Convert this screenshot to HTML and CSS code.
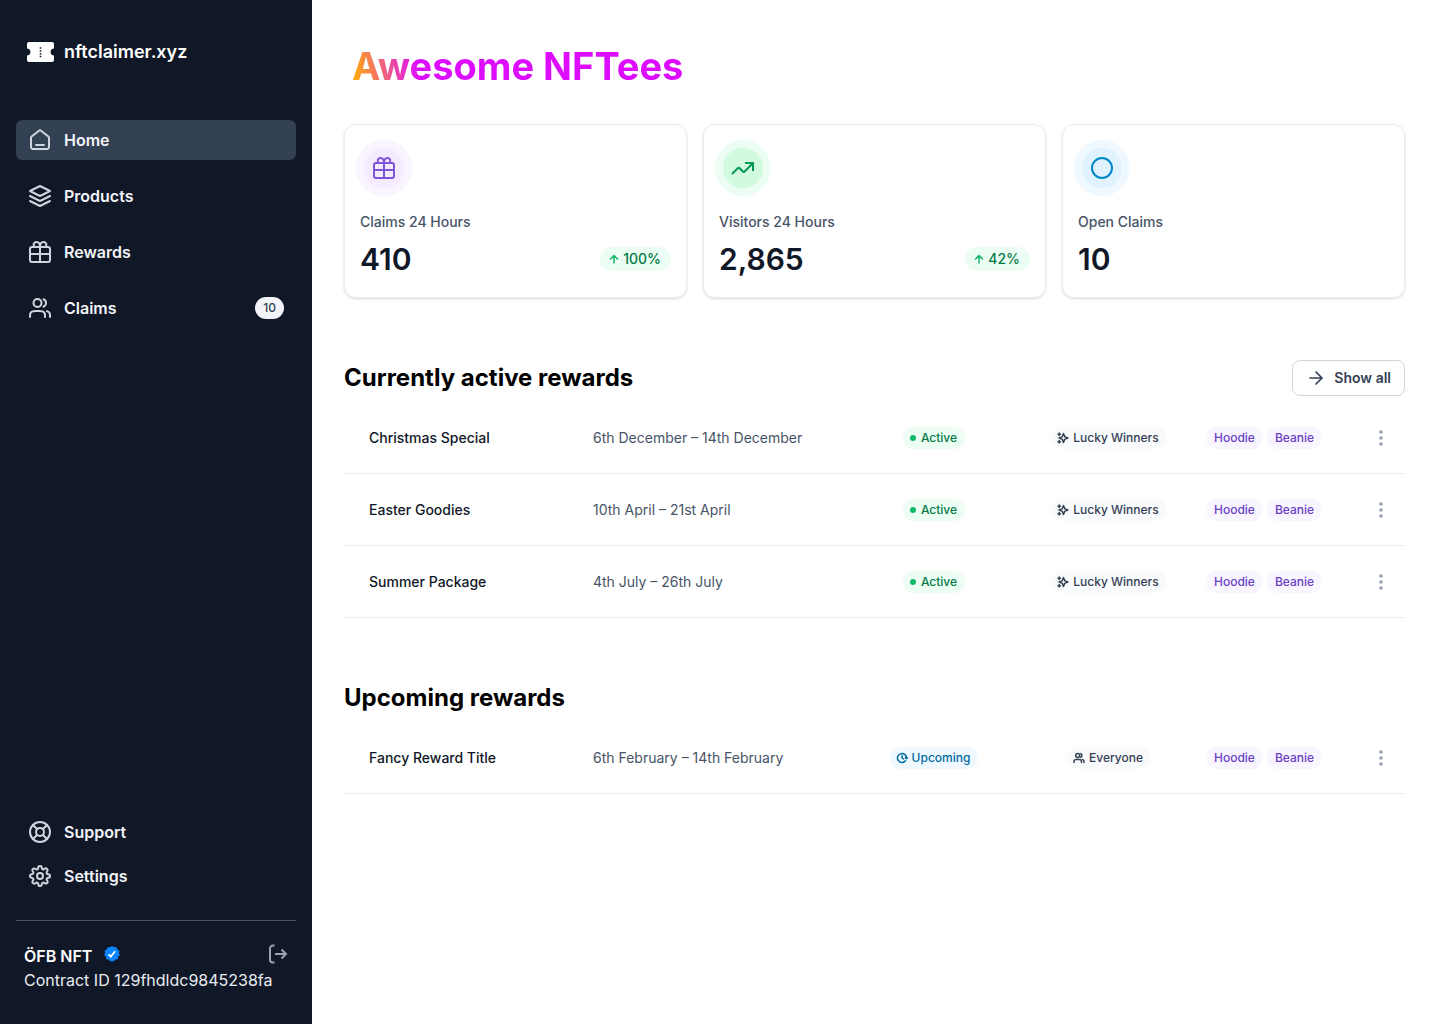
FILE: index.html
```
<!DOCTYPE html>
<html lang="en">
<head>
    <meta charset="UTF-8">
    <meta name="viewport" content="width=device-width, initial-scale=1.0">
    <title>nftclaimer.xyz - Awesome NFTees</title>
    <link rel="stylesheet" href="styles.css">
</head>
<body>

    <!-- Shared icons -->
    <svg class="sprite" aria-hidden="true">
        <symbol id="gift" viewBox="0 0 24 24">
            <path d="M12 7v15M2 14h20M4 7h16a2 2 0 0 1 2 2v11a2 2 0 0 1-2 2H4a2 2 0 0 1-2-2V9a2 2 0 0 1 2-2zM12 7c0-3-1-5-3.500-5A2.800 2.800 0 0 0 6.500 6.800M12 7c0-3 1-5 3.500-5a2.800 2.800 0 0 1 2 4.800"/>
        </symbol>
        <symbol id="users" viewBox="0 0 24 24">
            <path d="M22 21v-2c0-1.860-1.270-3.430-3-3.870M15.500 3.290a4 4 0 0 1 0 7.420M17 21c0-1.860 0-2.800-.3-3.530a4 4 0 0 0-2.170-2.170C13.800 15 12.860 15 11 15H8c-1.860 0-2.800 0-3.530.3a4 4 0 0 0-2.170 2.170C2 18.200 2 19.140 2 21M13.500 7a4 4 0 1 1-8 0 4 4 0 0 1 8 0z"/>
        </symbol>
        <symbol id="arrow-up" viewBox="0 0 12 12">
            <path d="M6 10V2.500M6 2.500L2.500 6M6 2.500L9.500 6"/>
        </symbol>
        <symbol id="stars" viewBox="0 0 24 24">
            <path d="M4.500 22v-5M4.500 7V2M2 4.500h5M2 19.500h5M13 3l-1.730 4.510c-.28.73-.42 1.100-.64 1.410-.2.270-.44.510-.71.700-.31.220-.68.360-1.410.65L4 12l4.510 1.730c.73.280 1.100.430 1.410.65.270.190.510.430.710.700.220.310.360.680.640 1.410L13 21l1.730-4.510c.280-.73.430-1.100.65-1.410.190-.27.430-.51.700-.71.310-.22.680-.36 1.410-.64L22 12l-4.510-1.730c-.73-.28-1.100-.43-1.410-.65a3 3 0 0 1-.700-.700c-.22-.31-.37-.68-.650-1.410L13 3z"/>
        </symbol>
        <symbol id="dots" viewBox="0 0 20 20">
            <circle cx="10" cy="4" r="1.800"/><circle cx="10" cy="10" r="1.800"/><circle cx="10" cy="16" r="1.800"/>
        </symbol>
    </svg>

    <div class="layout">
        <aside class="sidebar">
            <a href="#" class="logo">
                <svg width="27" height="20" viewBox="0 0 27 20" aria-hidden="true">
                    <path fill="#fff" d="M2 0h23a2 2 0 0 1 2 2v4.500c-2 .2-3.500 1.600-3.500 3.500s1.500 3.300 3.500 3.500V18a2 2 0 0 1-2 2H2a2 2 0 0 1-2-2v-4.500c2-.2 3.500-1.600 3.500-3.500S2 6.700 0 6.500V2a2 2 0 0 1 2-2z"/>
                    <path fill="#101828" d="M12.700 5.200h1.600v1.600h-1.600zM12.700 8.200h1.600v1.600h-1.600zM12.700 11h1.600v1.600h-1.600zM12.700 13.800h1.600v1.400h-1.600z"/>
                </svg>
                <span>nftclaimer.xyz</span>
            </a>

            <nav class="nav">
                <a href="#" class="nav-item active">
                    <svg class="icon" viewBox="0 0 24 24"><path d="M8 17h8M11.020 2.760L4.240 8.040c-.46.350-.68.530-.85.750-.14.200-.25.420-.32.650C3 9.700 3 9.990 3 10.570V17.800c0 1.120 0 1.680.220 2.110.190.370.5.680.870.870.430.220.990.220 2.110.220h11.600c1.120 0 1.680 0 2.110-.22.370-.19.680-.5.870-.87.220-.43.220-.99.220-2.110v-7.230c0-.58 0-.87-.07-1.130a2 2 0 0 0-.32-.65c-.17-.22-.39-.4-.85-.75l-6.780-5.280c-.35-.27-.53-.41-.72-.46a1 1 0 0 0-.52 0c-.19.050-.37.190-.72.460z"/></svg>
                    Home
                </a>
                <a href="#" class="nav-item">
                    <svg class="icon" viewBox="0 0 24 24"><path d="M2 7l10-5 10 5-10 5zM2 12l10 5 10-5M2 17l10 5 10-5"/></svg>
                    Products
                </a>
                <a href="#" class="nav-item">
                    <svg class="icon"><use href="#gift"/></svg>
                    Rewards
                </a>
                <a href="#" class="nav-item">
                    <svg class="icon"><use href="#users"/></svg>
                    Claims
                    <span class="count">10</span>
                </a>
            </nav>

            <nav class="nav nav-bottom">
                <a href="#" class="nav-item">
                    <svg class="icon" viewBox="0 0 24 24"><circle cx="12" cy="12" r="10"/><circle cx="12" cy="12" r="4"/><path d="M5 5l4.200 4.200M14.800 9.200L19 5M14.800 14.800L19 19M9.200 14.800L5 19"/></svg>
                    Support
                </a>
                <a href="#" class="nav-item">
                    <svg class="icon" viewBox="0 0 24 24"><circle cx="12" cy="12" r="3"/><path d="M18.730 14.730a1.500 1.500 0 0 0 .3 1.650l.05.060a1.820 1.820 0 1 1-2.570 2.570l-.06-.05a1.500 1.500 0 0 0-1.650-.3 1.500 1.500 0 0 0-.91 1.370v.150a1.820 1.820 0 0 1-3.640 0v-.08a1.500 1.500 0 0 0-.98-1.370 1.500 1.500 0 0 0-1.650.3l-.06.050a1.820 1.820 0 1 1-2.570-2.570l.05-.06a1.500 1.500 0 0 0 .3-1.650 1.500 1.500 0 0 0-1.370-.91h-.15a1.820 1.820 0 0 1 0-3.640h.08a1.500 1.500 0 0 0 1.370-.98 1.500 1.500 0 0 0-.3-1.650l-.05-.06A1.820 1.820 0 1 1 7.490 4.990l.06.050a1.500 1.500 0 0 0 1.650.3h.07a1.500 1.500 0 0 0 .91-1.370v-.15a1.820 1.820 0 0 1 3.640 0v.080a1.500 1.500 0 0 0 .91 1.370 1.500 1.500 0 0 0 1.650-.3l.06-.05a1.820 1.820 0 1 1 2.570 2.570l-.05.060a1.500 1.500 0 0 0-.3 1.650v.070a1.500 1.500 0 0 0 1.370.91h.150a1.820 1.820 0 0 1 0 3.640h-.08a1.500 1.500 0 0 0-1.370.91z"/></svg>
                    Settings
                </a>
            </nav>

            <div class="account">
                <div class="account-row">
                    <span class="account-name">ÖFB NFT</span>
                    <svg class="verified" viewBox="0.5 0.5 15 15" role="img" aria-label="Verified">
                        <path fill="#0b84ff" d="M8 .500l1.900 1.200 2.300-.1.800 2.100 2 1.200-.6 2.200L15.400 9l-1.700 1.600-.3 2.300-2.300.3L9.500 15 8 14.600 6.500 15l-1.600-1.800-2.300-.3-.3-2.300L.6 9l1-1.900L1 4.900l2-1.200.8-2.100 2.300.1z"/>
                        <path fill="none" stroke="#fff" stroke-width="1.700" d="M4.800 8.300l2.100 2.100 4-5"/>
                    </svg>
                    <button type="button" class="logout" aria-label="Log out">
                        <svg viewBox="0 0 20 20"><path d="M6.500 1.500H5a3 3 0 0 0-3 3v11a3 3 0 0 0 3 3h1.500M7 10h11M13.500 5.500L18 10l-4.500 4.500"/></svg>
                    </button>
                </div>
                <div class="contract">Contract ID 129fhdldc9845238fa</div>
            </div>
        </aside>

        <main class="content">
            <h1>Awesome NFTees</h1>

            <section class="cards">
                <div class="card">
                    <div class="card-icon purple"><svg class="icon"><use href="#gift"/></svg></div>
                    <div class="card-body">
                        <div class="card-label">Claims 24 Hours</div>
                        <div class="card-row">
                            <div class="card-value">410</div>
                            <div class="change"><svg><use href="#arrow-up"/></svg>100%</div>
                        </div>
                    </div>
                </div>
                <div class="card">
                    <div class="card-icon green"><svg class="icon sharp" viewBox="0 0 24 24"><path d="M1 18l5.800-5.800a1.300 1.300 0 0 1 1.800 0l3.300 3.300a1.300 1.300 0 0 0 1.800 0L22 7M14 7h8v8"/></svg></div>
                    <div class="card-body">
                        <div class="card-label">Visitors 24 Hours</div>
                        <div class="card-row">
                            <div class="card-value">2,865</div>
                            <div class="change"><svg><use href="#arrow-up"/></svg>42%</div>
                        </div>
                    </div>
                </div>
                <div class="card">
                    <div class="card-icon blue"><svg class="icon" viewBox="0 0 24 24"><circle cx="12" cy="12" r="10"/></svg></div>
                    <div class="card-body">
                        <div class="card-label">Open Claims</div>
                        <div class="card-row">
                            <div class="card-value">10</div>
                        </div>
                    </div>
                </div>
            </section>

            <section class="rewards">
                <div class="section-header">
                    <h2>Currently active rewards</h2>
                    <button type="button" class="btn">
                        <svg viewBox="0 0 20 20"><path d="M4 10h12M10 4l6 6-6 6"/></svg>
                        Show all
                    </button>
                </div>
                <table>
                    <colgroup>
                        <col class="col-name"><col><col class="col-status"><col class="col-type"><col class="col-tags"><col class="col-menu">
                    </colgroup>
                    <tbody>
                        <tr>
                            <td class="name">Christmas Special</td>
                            <td class="dates">6th December – 14th December</td>
                            <td class="center"><span class="badge active-badge">Active</span></td>
                            <td class="center type"><span class="badge gray"><svg><use href="#stars"/></svg>Lucky Winners</span></td>
                            <td class="center"><div class="tags"><span class="badge tag">Hoodie</span><span class="badge tag">Beanie</span></div></td>
                            <td class="center"><button type="button" class="menu" aria-label="More options"><svg><use href="#dots"/></svg></button></td>
                        </tr>
                        <tr>
                            <td class="name">Easter Goodies</td>
                            <td class="dates">10th April – 21st April</td>
                            <td class="center"><span class="badge active-badge">Active</span></td>
                            <td class="center type"><span class="badge gray"><svg><use href="#stars"/></svg>Lucky Winners</span></td>
                            <td class="center"><div class="tags"><span class="badge tag">Hoodie</span><span class="badge tag">Beanie</span></div></td>
                            <td class="center"><button type="button" class="menu" aria-label="More options"><svg><use href="#dots"/></svg></button></td>
                        </tr>
                        <tr>
                            <td class="name">Summer Package</td>
                            <td class="dates">4th July – 26th July</td>
                            <td class="center"><span class="badge active-badge">Active</span></td>
                            <td class="center type"><span class="badge gray"><svg><use href="#stars"/></svg>Lucky Winners</span></td>
                            <td class="center"><div class="tags"><span class="badge tag">Hoodie</span><span class="badge tag">Beanie</span></div></td>
                            <td class="center"><button type="button" class="menu" aria-label="More options"><svg><use href="#dots"/></svg></button></td>
                        </tr>
                    </tbody>
                </table>
            </section>

            <section class="rewards">
                <div class="section-header">
                    <h2>Upcoming rewards</h2>
                </div>
                <table>
                    <colgroup>
                        <col class="col-name"><col><col class="col-status"><col class="col-type"><col class="col-tags"><col class="col-menu">
                    </colgroup>
                    <tbody>
                        <tr>
                            <td class="name">Fancy Reward Title</td>
                            <td class="dates">6th February – 14th February</td>
                            <td class="center"><span class="badge upcoming"><svg viewBox="0 0 24 24"><path d="M23 11.500l-2.300 2-2-2M20.950 13A9 9 0 1 0 19 17.660M12 7v5l3 2"/></svg>Upcoming</span></td>
                            <td class="center type"><span class="badge gray"><svg><use href="#users"/></svg>Everyone</span></td>
                            <td class="center"><div class="tags"><span class="badge tag">Hoodie</span><span class="badge tag">Beanie</span></div></td>
                            <td class="center"><button type="button" class="menu" aria-label="More options"><svg><use href="#dots"/></svg></button></td>
                        </tr>
                    </tbody>
                </table>
            </section>
        </main>
    </div>

</body>
</html>
```
FILE: styles.css
```
/* Base styles */
* {
    box-sizing: border-box;
}

body {
    font-family: 'Inter', sans-serif;
    font-size: 14px;
    line-height: 20px;
    color: #101828;
    background: #fff;
    margin: 0;
}

a {
    color: inherit;
    text-decoration: none;
}

button {
    font-family: inherit;
    background: none;
    border: none;
    padding: 0;
    cursor: pointer;
}

svg {
    display: block;
    flex-shrink: 0;
}

.sprite {
    display: none;
}

.icon {
    width: 24px;
    height: 24px;
    fill: none;
    stroke: currentColor;
    stroke-width: 2;
    stroke-linecap: round;
    stroke-linejoin: round;
}

.icon.sharp {
    stroke-linecap: butt;
    stroke-linejoin: miter;
}

.layout {
    display: flex;
    min-height: 100vh;
}

/* Sidebar */
.sidebar {
    display: flex;
    flex-direction: column;
    flex-shrink: 0;
    width: 312px;
    padding: 40px 16px 32px;
    background: #101828;
    color: #fff;
}

.logo {
    display: flex;
    align-items: center;
    gap: 10px;
    padding: 0 11px;
    margin-bottom: 56px;
    font-size: 18px;
    font-weight: 600;
    line-height: 24px;
}

.nav {
    display: flex;
    flex-direction: column;
    gap: 16px;
}

.nav-item {
    display: flex;
    align-items: center;
    gap: 12px;
    padding: 8px 12px;
    border-radius: 6px;
    font-size: 16px;
    font-weight: 600;
    line-height: 24px;
    color: #f2f4f7;
}

.nav-item .icon {
    color: #d0d5dd;
}

.nav-item.active {
    background: #344054;
}

.count {
    margin-left: auto;
    padding: 2px 8px;
    border-radius: 16px;
    background: #f2f4f7;
    color: #344054;
    font-size: 12px;
    font-weight: 500;
    line-height: 18px;
}

.nav-bottom {
    gap: 4px;
    margin-top: auto;
}

.account {
    margin-top: 24px;
    padding: 23px 8px 0;
    border-top: 1px solid #475467;
    font-size: 16px;
    line-height: 24px;
}

.account-row {
    display: flex;
    align-items: flex-start;
}

.account-name {
    font-weight: 600;
}

.verified {
    width: 16px;
    height: 16px;
    margin: 2px 0 0 12px;
}

.logout {
    margin-left: auto;
}

.logout svg {
    width: 20px;
    height: 20px;
    fill: none;
    stroke: #98a2b3;
    stroke-width: 2;
}

.contract {
    color: #eaecf0;
    white-space: nowrap;
}

/* Main content */
.content {
    flex: 1;
    min-width: 0;
    padding: 40px 35px 40px 32px;
}

h1 {
    width: fit-content;
    margin: 0 8px 32px;
    font-size: 38px;
    font-weight: 700;
    line-height: 52px;
    color: transparent;
    background: linear-gradient(80deg, #ffa614 2%, #dd0cff 21%);
    -webkit-background-clip: text;
    background-clip: text;
}

.cards {
    display: grid;
    grid-template-columns: repeat(3, 1fr);
    gap: 16px;
}

.card {
    padding: 15px 11px 19px;
    border: 1px solid #eaecf0;
    border-radius: 12px;
    box-shadow: 0 1px 3px rgba(16, 24, 40, 0.1), 0 1px 2px rgba(16, 24, 40, 0.06);
}

.card-icon {
    display: flex;
    align-items: center;
    justify-content: center;
    width: 56px;
    height: 56px;
    border: 8px solid;
    border-radius: 50%;
}

.purple {
    color: #7f56d9;
    background: #f4ebff;
    border-color: #f9f5ff;
}

.green {
    color: #039855;
    background: #d1fadf;
    border-color: #ecfdf3;
}

.blue {
    color: #0086c9;
    background: #e0f2fe;
    border-color: #f0f9ff;
}

.card-body {
    padding: 16px 4px 0;
}

.card-label {
    margin-bottom: 8px;
    font-weight: 500;
    color: #475467;
}

.card-row {
    display: flex;
    align-items: center;
    justify-content: space-between;
}

.card-value {
    font-size: 30px;
    font-weight: 600;
    line-height: 38px;
}

.change {
    display: flex;
    align-items: center;
    gap: 3px;
    padding: 2px 10px 2px 8px;
    border-radius: 16px;
    background: #ecfdf3;
    color: #027a48;
    font-weight: 500;
}

.change svg {
    width: 12px;
    height: 12px;
    fill: none;
    stroke: #12b76a;
    stroke-width: 1.5;
    stroke-linecap: round;
}

/* Rewards */
.rewards {
    margin-top: 62px;
}

.section-header {
    display: flex;
    align-items: center;
    justify-content: space-between;
    min-height: 36px;
    margin-bottom: 6px;
}

h2 {
    margin: 0;
    font-size: 24px;
    font-weight: 700;
    line-height: 32px;
    color: #000;
}

.btn {
    display: flex;
    align-items: center;
    gap: 8px;
    padding: 7px 13px;
    border: 1px solid #d0d5dd;
    border-radius: 8px;
    font-size: 14px;
    font-weight: 600;
    line-height: 20px;
    color: #344054;
}

.btn svg {
    width: 20px;
    height: 20px;
    fill: none;
    stroke: currentColor;
    stroke-width: 1.7;
    stroke-linecap: round;
    stroke-linejoin: round;
}

table {
    width: 100%;
    table-layout: fixed;
    border-spacing: 0;
}

.col-name {
    width: 224px;
}

.col-status {
    width: 226px;
}

.col-type {
    width: 124px;
}

.col-tags {
    width: 186px;
}

.col-menu {
    width: 48px;
}

td {
    height: 72px;
    padding: 0;
    border-bottom: 1px solid #eaecf0;
    white-space: nowrap;
}

/* Row line starts 2px in, leaving a small gap between the two halves */
td.type {
    padding-bottom: 1px;
    border-bottom: none;
    background: linear-gradient(#eaecf0, #eaecf0) 2px 100% / 100% 1px no-repeat;
}

td.name,
td.dates {
    padding-left: 25px;
}

.name {
    font-weight: 500;
}

.dates {
    color: #475467;
}

.center {
    text-align: center;
}

.badge {
    display: inline-flex;
    align-items: center;
    gap: 4px;
    padding: 2px 8px;
    border-radius: 16px;
    font-size: 12px;
    font-weight: 500;
    line-height: 18px;
    vertical-align: middle;
}

.badge svg {
    width: 12px;
    height: 12px;
    margin-left: -2px;
    fill: none;
    stroke: currentColor;
    stroke-width: 3;
    stroke-linecap: round;
    stroke-linejoin: round;
}

.active-badge {
    background: #ecfdf3;
    color: #027a48;
}

.active-badge::before {
    content: "";
    width: 6px;
    height: 6px;
    margin: 0 1px 0 -1px;
    border-radius: 50%;
    background: #12b76a;
}

.upcoming {
    background: #f0f9ff;
    color: #026aa2;
}

.gray {
    background: #f9fafb;
    color: #344054;
}

.tags {
    display: flex;
    justify-content: center;
    gap: 4px;
}

.tag {
    background: #f9f5ff;
    color: #6941c6;
}

.menu {
    vertical-align: middle;
}

.menu svg {
    width: 20px;
    height: 20px;
    fill: #98a2b3;
}

@media (max-width: 768px) {
    .layout {
        flex-direction: column;
    }

    .sidebar {
        width: 100%;
    }

    .cards {
        grid-template-columns: 1fr;
    }

    .rewards {
        overflow-x: auto;
    }
}
```
